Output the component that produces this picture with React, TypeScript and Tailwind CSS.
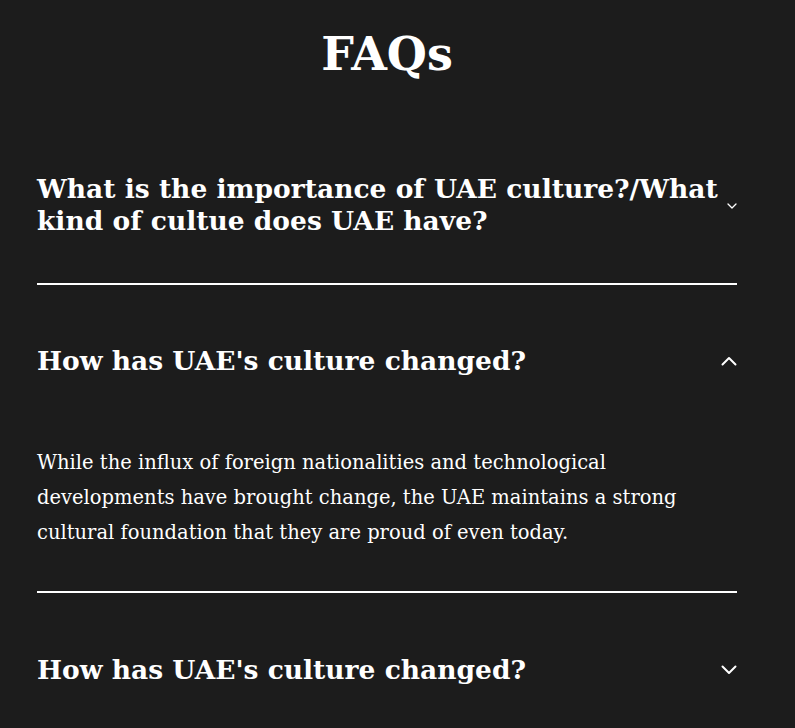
import React from "react";

const ChevronBig = ({ up }: { up?: boolean }) => (
  <svg width="16" height="10" viewBox="0 0 16 10" fill="none" stroke="white" strokeWidth={2} strokeLinecap="round" strokeLinejoin="round" className="shrink-0">
    {up ? <path d="M1.5 8.5L8 2l6.5 6.5" /> : <path d="M1.5 1.5L8 8l6.5-6.5" />}
  </svg>
);

const ChevronSmall = () => (
  <svg width="10" height="6" viewBox="0 0 10 6" fill="none" stroke="white" strokeWidth={1.3} strokeLinecap="round" strokeLinejoin="round" className="shrink-0 mt-[2px]">
    <path d="M1 1l4 4 4-4" />
  </svg>
);

export default function App() {
  const serif = { fontFamily: '"DejaVu Serif", Georgia, serif' };
  return (
    <div className="min-h-[728px] bg-[#1c1c1c] text-white" style={serif}>
      <div className="ml-[37px] w-[700px] pt-[24px]">
        <h1 className="text-center text-[46px] font-bold leading-[60px]">FAQs</h1>
        <div className="mt-[89px] flex items-center justify-between pb-[46px] border-b-2 border-white">
          <h2 className="text-[26.5px] font-bold leading-[32px] whitespace-nowrap">
            What is the importance of UAE culture?/What
            <br />
            kind of cultue does UAE have?
          </h2>
          <ChevronSmall />
        </div>
        <div className="pt-[60px] flex items-center justify-between">
          <h2 className="text-[26.5px] font-bold leading-[32px]">How has UAE's culture changed?</h2>
          <ChevronBig up />
        </div>
        <p className="mt-[68px] text-[19.5px] leading-[35px] pb-[41px] border-b-2 border-white">
          While the influx of foreign nationalities and technological developments have brought change, the UAE maintains a strong cultural foundation that they are proud of even today.
        </p>
        <div className="pt-[61px] flex items-center justify-between">
          <h2 className="text-[26.5px] font-bold leading-[32px]">How has UAE's culture changed?</h2>
          <ChevronBig />
        </div>
      </div>
    </div>
  );
}
